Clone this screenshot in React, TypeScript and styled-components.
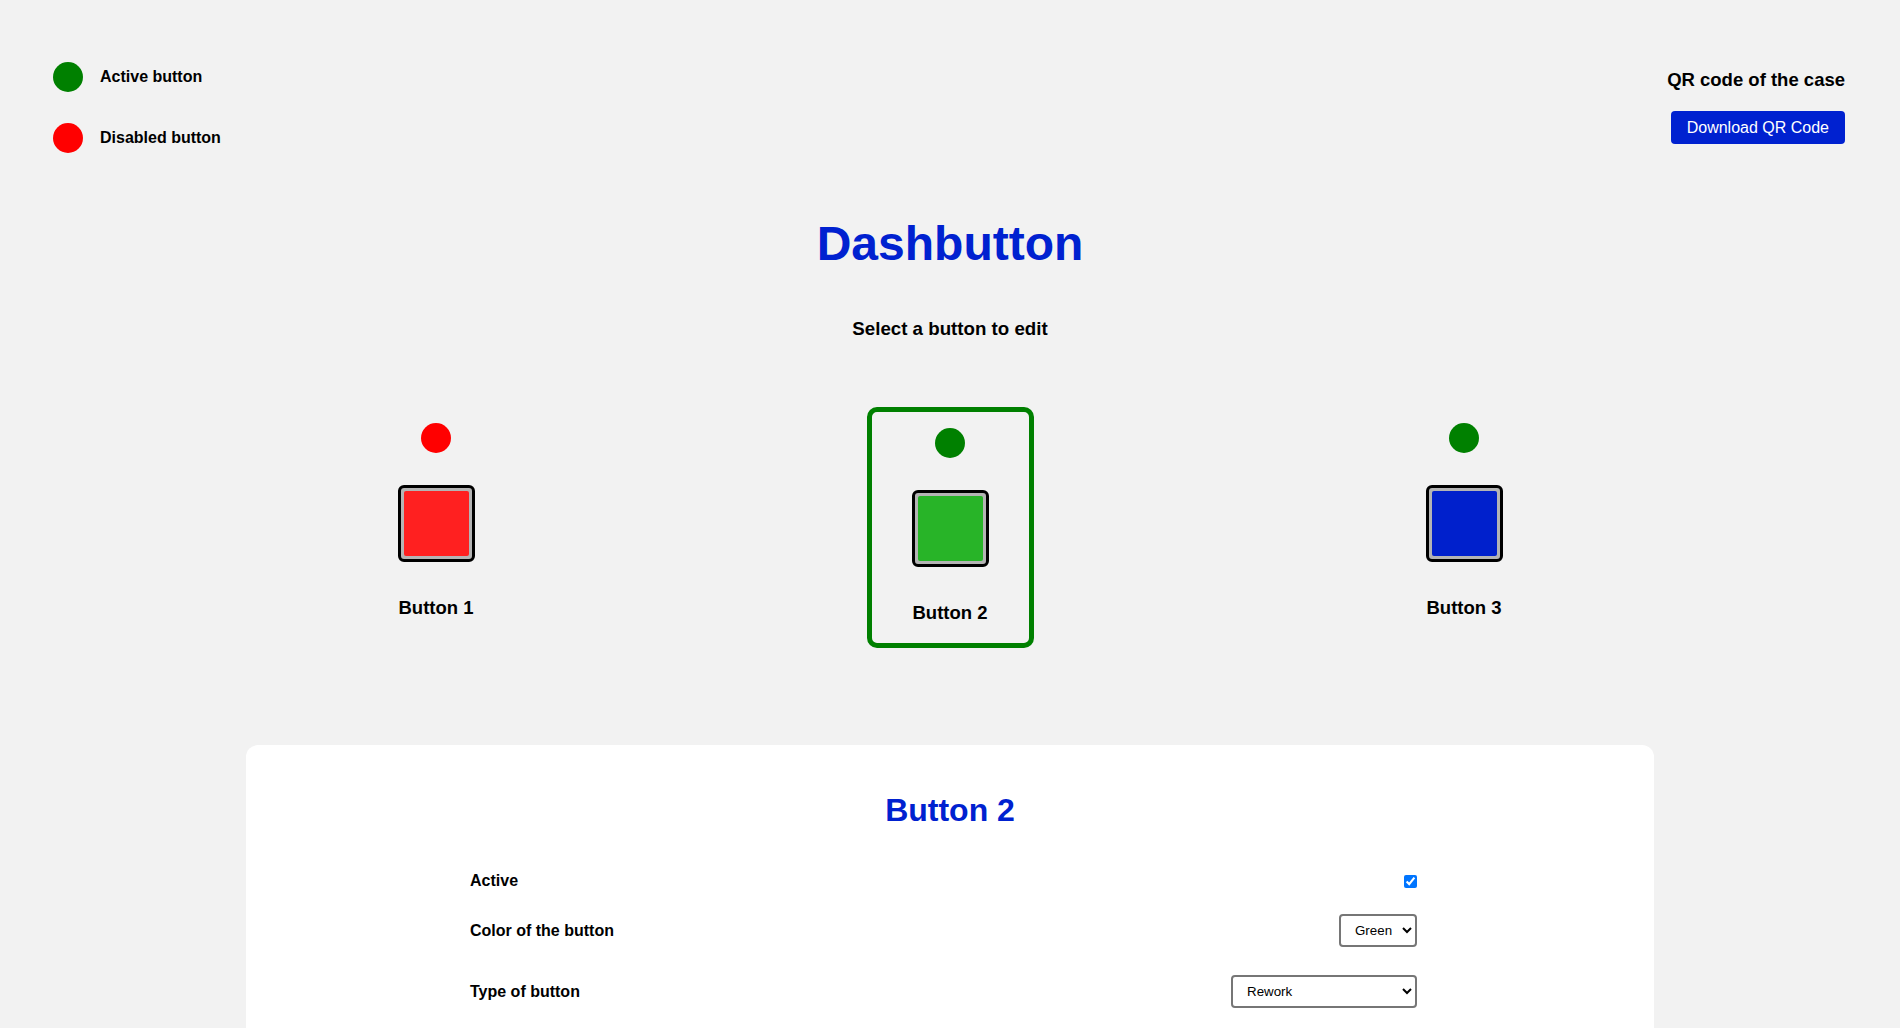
import React from "react"
import styled, { createGlobalStyle } from "styled-components"

const BLUE = "#0021d0"

const GlobalStyle = createGlobalStyle`
  body {
    margin: 0;
    background: #f2f2f2;
    font-family: "Liberation Sans", Arial, sans-serif;
    color: #000;
  }
`

type DashButton = {
  id: number
  name: string
  color: string
  active: boolean
}

const buttons: DashButton[] = [
  { id: 1, name: "Button 1", color: "#ff2020", active: false },
  { id: 2, name: "Button 2", color: "#28b428", active: true },
  { id: 3, name: "Button 3", color: "#0020cc", active: true },
]

export default function App() {
  const [selected, setSelected] = React.useState(2)
  const current = buttons.find((b) => b.id === selected) as DashButton

  return (
    <Page>
      <GlobalStyle />
      <Header>
        <Legend>
          <LegendItem>
            <Dot $color="#008000" />
            <LegendText>Active button</LegendText>
          </LegendItem>
          <LegendItem>
            <Dot $color="#ff0000" />
            <LegendText>Disabled button</LegendText>
          </LegendItem>
        </Legend>
        <QrBox>
          <QrTitle>QR code of the case</QrTitle>
          <DownloadButton>Download QR Code</DownloadButton>
        </QrBox>
      </Header>

      <Title>Dashbutton</Title>
      <Subtitle>Select a button to edit</Subtitle>

      <Cards>
        {buttons.map((b) => (
          <Card key={b.id} $selected={b.id === selected} onClick={() => setSelected(b.id)}>
            <Dot $color={b.active ? "#008000" : "#ff0000"} />
            <Square>
              <Fill $color={b.color} />
            </Square>
            <CardLabel>{b.name}</CardLabel>
          </Card>
        ))}
      </Cards>

      <Panel>
        <PanelTitle>{current.name}</PanelTitle>
        <Form>
          <FormRow $gap={0}>
            <FieldLabel>Active</FieldLabel>
            <Checkbox type="checkbox" defaultChecked={current.active} />
          </FormRow>
          <FormRow $gap={24}>
            <FieldLabel>Color of the button</FieldLabel>
            <Select $width={78} defaultValue="Green">
              <option>Red</option>
              <option>Green</option>
              <option>Blue</option>
            </Select>
          </FormRow>
          <FormRow $gap={28}>
            <FieldLabel>Type of button</FieldLabel>
            <Select $width={186} defaultValue="Rework">
              <option>Rework</option>
              <option>Scrap</option>
              <option>Call</option>
            </Select>
          </FormRow>
        </Form>
      </Panel>
    </Page>
  )
}

const Page = styled.div`
  min-height: 1028px;
`

const Header = styled.header`
  display: flex;
  justify-content: space-between;
  align-items: flex-start;
  padding: 0 55px 0 53px;
`

const Legend = styled.div`
  display: flex;
  flex-direction: column;
  gap: 31px;
  padding-top: 62px;
`

const LegendItem = styled.div`
  display: flex;
  align-items: center;
  gap: 17px;
  height: 30px;
`

const Dot = styled.span<{ $color: string }>`
  display: block;
  width: 30px;
  height: 30px;
  border-radius: 50%;
  background: ${(p) => p.$color};
  flex-shrink: 0;
`

const LegendText = styled.span`
  font-size: 16px;
  font-weight: bold;
  line-height: 18px;
`

const QrBox = styled.div`
  display: flex;
  flex-direction: column;
  align-items: flex-end;
  gap: 20px;
  padding-top: 69px;
`

const QrTitle = styled.h3`
  margin: 0;
  font-size: 18.5px;
  line-height: 22px;
  font-weight: bold;
`

const DownloadButton = styled.button`
  background: ${BLUE};
  color: #fff;
  border: none;
  border-radius: 4px;
  font-family: "Liberation Sans", Arial, sans-serif;
  font-size: 16px;
  line-height: 19px;
  padding: 7px 16px;
  cursor: pointer;
`

const Title = styled.h1`
  margin: 63px 0 0;
  text-align: center;
  font-size: 48px;
  line-height: 56px;
  font-weight: bold;
  color: ${BLUE};
`

const Subtitle = styled.h3`
  margin: 46px 0 0;
  text-align: center;
  font-size: 18.72px;
  line-height: 22px;
  font-weight: bold;
`

const Cards = styled.div`
  display: grid;
  grid-template-columns: repeat(3, 514px);
  justify-content: center;
  justify-items: center;
  align-items: start;
  margin-top: 67px;
`

const Card = styled.div<{ $selected: boolean }>`
  display: flex;
  flex-direction: column;
  align-items: center;
  padding: 16px 40px 19px;
  border: ${(p) => (p.$selected ? "5px solid #008000" : "none")};
  border-radius: 10px;
  cursor: pointer;
`

const Square = styled.div`
  box-sizing: border-box;
  width: 77px;
  height: 77px;
  margin-top: 32px;
  padding: 3px;
  border: 3px solid #000;
  border-radius: 6px;
  background: #b4b4b4;
`

const Fill = styled.div<{ $color: string }>`
  width: 100%;
  height: 100%;
  border-radius: 2px;
  background: ${(p) => p.$color};
`

const CardLabel = styled.h3`
  margin: 35px 0 0;
  font-size: 18.5px;
  line-height: 22px;
  font-weight: bold;
`

const Panel = styled.section`
  box-sizing: border-box;
  width: 1408px;
  margin: 97px auto 0;
  padding: 47px 0 80px;
  background: #fff;
  border-radius: 12px;
`

const PanelTitle = styled.h2`
  margin: 0;
  text-align: center;
  font-size: 32px;
  line-height: 37px;
  font-weight: bold;
  color: ${BLUE};
`

const Form = styled.div`
  display: flex;
  flex-direction: column;
  width: 947px;
  margin: 43px 0 0 224px;
`

const FormRow = styled.div<{ $gap: number }>`
  display: flex;
  justify-content: space-between;
  align-items: center;
  margin-top: ${(p) => p.$gap}px;
`

const FieldLabel = styled.label`
  font-size: 16px;
  font-weight: bold;
  line-height: 18px;
`

const Checkbox = styled.input`
  width: 13px;
  height: 13px;
  margin: 0;
`

const Select = styled.select<{ $width: number }>`
  box-sizing: border-box;
  width: ${(p) => p.$width}px;
  height: 33px;
  padding: 0 6px 0 10px;
  border: 2px solid #767676;
  border-radius: 4px;
  background: #fff;
  color: #000;
  font-family: "Liberation Sans", Arial, sans-serif;
  font-size: 13.33px;
`
